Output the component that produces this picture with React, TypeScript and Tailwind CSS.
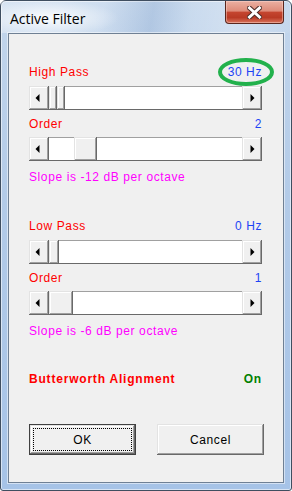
import React from 'react';

const raised =
  'bg-[#f0f0f0] shadow-[inset_-1px_-1px_0_#696969,inset_1px_1px_0_#e3e3e3,inset_-2px_-2px_0_#a0a0a0,inset_2px_2px_0_#ffffff]';

function Arrow({ dir }: { dir: 'left' | 'right' }) {
  return (
    <svg width="5" height="8" viewBox="0 0 5 8" className="block">
      {dir === 'left' ? <polygon points="4.5,0 4.5,8 0.5,4" fill="#000" /> : <polygon points="0.5,0 0.5,8 4.5,4" fill="#000" />}
    </svg>
  );
}

function ScrollBar({ children }: { children: React.ReactNode }) {
  return (
    <div className="flex h-[24px] w-[233px] bg-white shadow-[inset_0_1px_0_#a0a0a0,inset_0_-1px_0_#696969]">
      <div className={`${raised} flex w-[20px] items-center justify-center pr-[3px]`}>
        <Arrow dir="left" />
      </div>
      {children}
      <div className="flex-1" />
      <div className={`${raised} flex w-[20px] items-center justify-center pl-[1px]`}>
        <Arrow dir="right" />
      </div>
    </div>
  );
}

function Row({ label, value, circled }: { label: string; value: string; circled?: boolean }) {
  return (
    <div className="relative flex h-[14px] w-[233px] items-center justify-between text-[12px] leading-[14px] tracking-[0.6px]">
      <span className="text-[#ff0000]">{label}</span>
      <span className="text-[#1d44f5]">{value}</span>
      {circled && (
        <svg width="60" height="32" viewBox="0 0 60 32" className="absolute right-[-14px] top-[-9px]">
          <ellipse cx="30" cy="16" rx="26" ry="12" fill="none" stroke="#22b14c" strokeWidth="4" />
        </svg>
      )}
    </div>
  );
}

export default function App() {
  return (
    <div className="h-[491px] w-[292px] overflow-hidden font-['Liberation_Sans',Arial,sans-serif]">
      <div className="flex h-full flex-col rounded-t-[6px] rounded-b-[3px] border border-[#3f4e60] bg-[linear-gradient(to_bottom,#c3d6ec_0%,#b3cbe8_40%,#a6c3e7_100%)] shadow-[inset_0_0_0_1px_rgba(255,255,255,0.55)]">
        <div className="flex h-[32px] items-start justify-between pl-[9px] pr-[7px] bg-[radial-gradient(ellipse_70px_18px_at_48px_17px,rgba(255,255,255,0.9),rgba(255,255,255,0)),linear-gradient(100deg,rgba(255,255,255,0.35)_0%,rgba(255,255,255,0.2)_35%,rgba(60,100,160,0.12)_52%,rgba(255,255,255,0.12)_65%,rgba(255,255,255,0.28)_80%,rgba(255,255,255,0.05)_100%)]">
          <span className="mt-[8px] font-['Open_Sans','Noto_Sans',sans-serif] text-[14px] leading-[20px] text-black">Active Filter</span>
          <div className="flex h-[23px] w-[59px] items-center justify-center rounded-b-[4px] border border-t-0 border-[#5a261d] bg-[linear-gradient(to_bottom,#eab0a2_0%,#de8c7a_45%,#c4452f_52%,#b93a25_75%,#d9735c_100%)] shadow-[inset_0_0_0_1px_rgba(255,220,210,0.45)]">
            <svg width="15" height="13" viewBox="0 0 15 13">
              <path d="M2.5 2 L12.5 11 M12.5 2 L2.5 11" stroke="#4b2a26" strokeWidth="5" strokeLinecap="square" />
              <path d="M2.5 2 L12.5 11 M12.5 2 L2.5 11" stroke="#ffffff" strokeWidth="3" strokeLinecap="square" />
            </svg>
          </div>
        </div>
        <div className="flex flex-1 px-[7px] pb-[7px]">
          <div className="flex-1 border border-[#6f8094] bg-[#f0f0f0] pl-[20px] pt-[31px] shadow-[0_0_0_1px_rgba(255,255,255,0.5)]">
            <Row label="High Pass" value="30 Hz" circled />
            <div className="mt-[7px]">
              <ScrollBar>
                <div className={`${raised} w-[8px]`} />
                <div className={`${raised} w-[8px]`} />
              </ScrollBar>
            </div>
            <div className="mt-[7px]">
              <Row label="Order" value="2" />
            </div>
            <div className="mt-[6px]">
              <ScrollBar>
                <div className="w-[25px]" />
                <div className={`${raised} w-[23px]`} />
              </ScrollBar>
            </div>
            <p className="mt-[9px] h-[14px] text-[12px] leading-[14px] tracking-[0.6px] text-[#ff00ff]">Slope is -12 dB per octave</p>

            <div className="mt-[35px]">
              <Row label="Low Pass" value="0 Hz" />
            </div>
            <div className="mt-[7px]">
              <ScrollBar>
                <div className={`${raised} w-[10px]`} />
              </ScrollBar>
            </div>
            <div className="mt-[7px]">
              <Row label="Order" value="1" />
            </div>
            <div className="mt-[6px]">
              <ScrollBar>
                <div className={`${raised} w-[24px]`} />
              </ScrollBar>
            </div>
            <p className="mt-[9px] h-[14px] text-[12px] leading-[14px] tracking-[0.6px] text-[#ff00ff]">Slope is -6 dB per octave</p>

            <div className="mt-[34px] flex h-[14px] w-[233px] items-center justify-between text-[12px] font-bold leading-[14px] tracking-[0.8px]">
              <span className="text-[#ff0000]">Butterworth Alignment</span>
              <span className="text-[#008000]">On</span>
            </div>

            <div className="mt-[38px] flex w-[235px] gap-[21px] text-[12px] leading-[14px] tracking-[0.6px] text-black">
              <button className={`${raised} flex h-[31px] w-[107px] border border-[#404040] p-[3px]`}>
                <span className="flex flex-1 items-center justify-center border border-dotted border-black">OK</span>
              </button>
              <button className={`${raised} flex h-[31px] w-[107px] items-center justify-center`}>Cancel</button>
            </div>
          </div>
        </div>
      </div>
    </div>
  );
}
